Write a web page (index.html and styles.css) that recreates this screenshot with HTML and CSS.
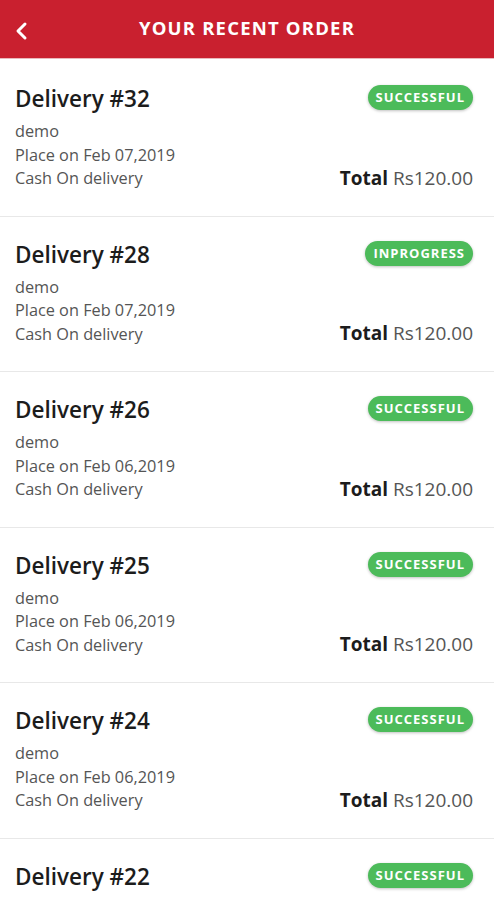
FILE: index.html
```html
<!DOCTYPE html>
<html lang="en">
  <head>
    <meta charset="UTF-8" />
    <meta name="viewport" content="width=device-width, initial-scale=1.0" />
    <title>Your Recent Order</title>
    <link rel="stylesheet" href="styles.css">
  </head>
  <body>
    <header class="top-bar">
      <button class="back-button" aria-label="Back">
        <svg width="14" height="20" viewBox="0 0 14 20">
          <polyline points="11,3 4,10 11,17" fill="none" stroke="#fff" stroke-width="3" stroke-linecap="round" stroke-linejoin="round" />
        </svg>
      </button>
      <h1 class="top-title">YOUR RECENT ORDER</h1>
    </header>

    <div class="order-list">
      <div class="order-card">
        <div class="order-info">
          <div class="order-title">Delivery #32</div>
          <div class="order-line">demo</div>
          <div class="order-line">Place on Feb 07,2019</div>
          <div class="order-line">Cash On delivery</div>
        </div>
        <div class="order-side">
          <span class="status-badge">SUCCESSFUL</span>
          <div class="order-total"><b>Total</b> Rs120.00</div>
        </div>
      </div>

      <div class="order-card">
        <div class="order-info">
          <div class="order-title">Delivery #28</div>
          <div class="order-line">demo</div>
          <div class="order-line">Place on Feb 07,2019</div>
          <div class="order-line">Cash On delivery</div>
        </div>
        <div class="order-side">
          <span class="status-badge">INPROGRESS</span>
          <div class="order-total"><b>Total</b> Rs120.00</div>
        </div>
      </div>

      <div class="order-card">
        <div class="order-info">
          <div class="order-title">Delivery #26</div>
          <div class="order-line">demo</div>
          <div class="order-line">Place on Feb 06,2019</div>
          <div class="order-line">Cash On delivery</div>
        </div>
        <div class="order-side">
          <span class="status-badge">SUCCESSFUL</span>
          <div class="order-total"><b>Total</b> Rs120.00</div>
        </div>
      </div>

      <div class="order-card">
        <div class="order-info">
          <div class="order-title">Delivery #25</div>
          <div class="order-line">demo</div>
          <div class="order-line">Place on Feb 06,2019</div>
          <div class="order-line">Cash On delivery</div>
        </div>
        <div class="order-side">
          <span class="status-badge">SUCCESSFUL</span>
          <div class="order-total"><b>Total</b> Rs120.00</div>
        </div>
      </div>

      <div class="order-card">
        <div class="order-info">
          <div class="order-title">Delivery #24</div>
          <div class="order-line">demo</div>
          <div class="order-line">Place on Feb 06,2019</div>
          <div class="order-line">Cash On delivery</div>
        </div>
        <div class="order-side">
          <span class="status-badge">SUCCESSFUL</span>
          <div class="order-total"><b>Total</b> Rs120.00</div>
        </div>
      </div>

      <!-- last card is cut by the bottom of the screen -->
      <div class="order-card">
        <div class="order-info">
          <div class="order-title">Delivery #22</div>
        </div>
        <div class="order-side">
          <span class="status-badge">SUCCESSFUL</span>
        </div>
      </div>
    </div>
  </body>
</html>
```

FILE: styles.css
```css
body {
  margin: 0;
  background-color: #fff;
  font-family: "Open Sans", "Noto Sans", sans-serif;
  color: #222;
  overflow: hidden;
}
.top-bar {
  display: flex;
  align-items: center;
  height: 58px;
  background-color: #c9202f;
  border-bottom: 1px solid #eab8bc;
}
.back-button {
  display: flex;
  align-items: center;
  justify-content: center;
  width: 40px;
  height: 40px;
  margin-left: 1px;
  margin-top: 3px;
  padding: 0;
  border: none;
  background: none;
}
.top-title {
  flex: 1;
  margin: 0 41px 4px 0;
  text-align: center;
  color: #fff;
  font-size: 18.5px;
  font-weight: 700;
  letter-spacing: 1.2px;
}
.order-list {
  padding-top: 2px;
}
.order-card {
  display: flex;
  justify-content: space-between;
  padding: 24px 21px 25px 15px;
  border-bottom: 1px solid #e8e8e8;
}
.order-title {
  font-size: 22.5px;
  font-weight: 600;
  line-height: 28px;
  color: #1c1c1c;
  margin-bottom: 7px;
}
.order-line {
  font-size: 16.3px;
  line-height: 23.5px;
  color: #555;
}
.order-side {
  display: flex;
  flex-direction: column;
  align-items: flex-end;
  justify-content: space-between;
}
.status-badge {
  display: inline-block;
  height: 25px;
  line-height: 25px;
  padding: 0 8px;
  border-radius: 13px;
  background-color: #4cbb5a;
  color: #fff;
  font-size: 13px;
  font-weight: 700;
  letter-spacing: 1px;
  box-shadow: 0 1px 3px rgba(0, 0, 0, 0.25);
}
.order-total {
  font-size: 19px;
  line-height: 26px;
  color: #555;
}
.order-total b {
  color: #1c1c1c;
  font-weight: 700;
}
```
